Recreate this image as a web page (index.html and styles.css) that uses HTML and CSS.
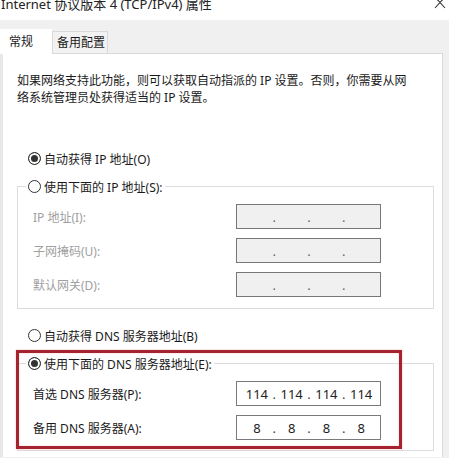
FILE: index.html
```html
<!DOCTYPE html>
<html lang="zh-CN">
<head>
    <meta charset="UTF-8">
    <meta name="viewport" content="width=device-width, initial-scale=1.0">
    <title>Internet 协议版本 4 (TCP/IPv4) 属性</title>
    <link rel="stylesheet" href="styles.css">
</head>
<body>
    <div class="titlebar">
        <span class="title">Internet 协议版本 4 (TCP/IPv4) 属性</span>
        <svg class="close" width="12" height="12" viewBox="0 0 12 12">
            <path d="M1 0 L11 11 M11 0 L1 11" stroke="#333" stroke-width="1.1" fill="none"/>
        </svg>
    </div>

    <div class="tabs">
        <div class="tab active">常规</div>
        <div class="tab">备用配置</div>
    </div>

    <div class="panel">
        <p class="desc">如果网络支持此功能，则可以获取自动指派的 IP 设置。否则，你需要从网<br>络系统管理员处获得适当的 IP 设置。</p>

        <div class="option first">
            <span class="radio checked"></span>自动获得 IP 地址(O)
        </div>

        <!-- manual IP group (disabled) -->
        <div class="group">
            <div class="legend"><span class="radio"></span>使用下面的 IP 地址(S):</div>
            <div class="fields disabled">
                <span class="label">IP 地址(I):</span>
                <div class="ip"><span></span><i>.</i><span></span><i>.</i><span></span><i>.</i><span></span></div>
                <span class="label">子网掩码(U):</span>
                <div class="ip"><span></span><i>.</i><span></span><i>.</i><span></span><i>.</i><span></span></div>
                <span class="label">默认网关(D):</span>
                <div class="ip"><span></span><i>.</i><span></span><i>.</i><span></span><i>.</i><span></span></div>
            </div>
        </div>

        <div class="option dns-auto">
            <span class="radio"></span>自动获得 DNS 服务器地址(B)
        </div>

        <!-- manual DNS group -->
        <div class="group dns">
            <div class="legend"><span class="radio checked"></span>使用下面的 DNS 服务器地址(E):</div>
            <div class="fields">
                <span class="label">首选 DNS 服务器(P):</span>
                <div class="ip"><span>114</span><i>.</i><span>114</span><i>.</i><span>114</span><i>.</i><span>114</span></div>
                <span class="label">备用 DNS 服务器(A):</span>
                <div class="ip"><span>8</span><i>.</i><span>8</span><i>.</i><span>8</span><i>.</i><span>8</span></div>
            </div>
        </div>

        <div class="highlight"></div>
    </div>
</body>
</html>
```

FILE: styles.css
```css
body {
    margin: 0;
    background: #f0f0f0;
    font-family: "Noto Sans", "Noto Sans CJK SC", sans-serif;
    font-size: 12px;
    color: #1a1a1a;
    overflow: hidden;
    height: 458px;
}
.titlebar {
    height: 20px;
    background: #fff;
    display: flex;
    justify-content: space-between;
    align-items: flex-start;
    overflow: hidden;
}
.title {
    font-size: 13px;
    line-height: 13px;
    margin: -2px 0 0 1px;
    color: #222;
    white-space: nowrap;
}
.close {
    margin: -3px 3px 0 0;
}
.tabs {
    height: 33px;
    display: flex;
    align-items: flex-end;
    border-bottom: 1px solid #d9d9d9;
    margin-right: 6px;
}
.tab {
    box-sizing: border-box;
    height: 22px;
    line-height: 21px;
    padding: 0 0 0 4px;
    width: 56px;
    border: 1px solid #d9d9d9;
    border-bottom: none;
    background: #f2f2f2;
}
.tab.active {
    width: 52px;
    height: 25px;
    line-height: 25px;
    padding-left: 9px;
    border: none;
    background: #fff;
    margin-bottom: -1px;
    position: relative;
}
.panel {
    position: relative;
    background: #fff;
    margin-right: 6px;
    border-left: 3px solid #e8e8e8;
    border-right: 1px solid #dadada;
    padding: 18px 8px 6px 14px;
}
.desc {
    margin: 0;
    line-height: 17px;
    white-space: nowrap;
}
.option {
    display: flex;
    align-items: center;
    gap: 3px;
    height: 17px;
    margin-left: 11px;
}
.option.first {
    margin-top: 44px;
}
.option.dns-auto {
    margin-top: 18px;
}
.radio {
    box-sizing: border-box;
    width: 13px;
    height: 13px;
    border: 1px solid #333;
    border-radius: 50%;
    background: #fff;
    flex: none;
}
.radio.checked {
    background: #333;
    box-shadow: inset 0 0 0 2px #fff;
}
.group {
    border: 1px solid #dcdcdc;
    margin-top: 19px;
    padding-bottom: 11px;
}
.group.dns {
    padding-bottom: 10px;
}
.legend {
    display: flex;
    align-items: center;
    gap: 3px;
    height: 17px;
    width: fit-content;
    margin: -9px 0 0 8px;
    padding: 0 2px;
    background: #fff;
}
.fields {
    display: grid;
    grid-template-columns: 203px 145px;
    grid-auto-rows: 25px;
    row-gap: 9px;
    margin-top: 9px;
    padding-left: 15px;
    align-items: center;
}
.fields.disabled .label {
    color: #a0a0a0;
}
.ip {
    box-sizing: border-box;
    height: 25px;
    border: 1px solid #7a7a7a;
    display: flex;
    align-items: center;
    padding: 0 4px 0 5px;
    font-size: 13px;
    color: #222;
    background: #fff;
}
.disabled .ip {
    background: #f0f0f0;
    border-color: #777;
}
.ip span {
    width: 30px;
    text-align: center;
}
.ip i {
    width: 5px;
    text-align: center;
    font-style: normal;
    color: #444;
}
.disabled .ip i {
    color: #666;
}
.highlight {
    position: absolute;
    left: 13px;
    top: 296px;
    width: 386px;
    height: 99px;
    box-sizing: border-box;
    border: 3px solid #a5232f;
    box-shadow: 0 0 2px rgba(230, 60, 70, 0.35), inset 0 0 2px rgba(230, 60, 70, 0.35);
}
```
